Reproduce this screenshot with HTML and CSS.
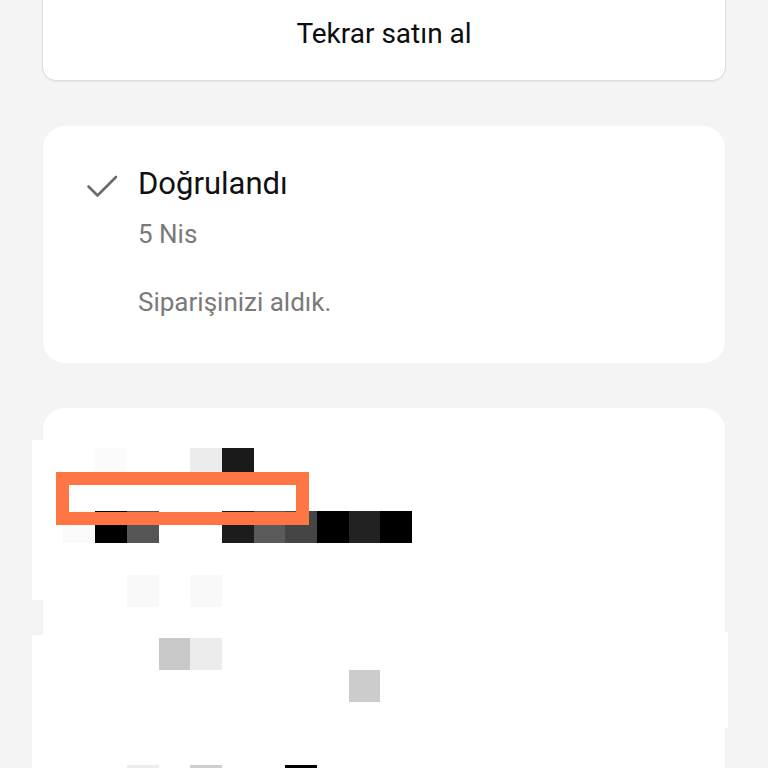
FILE: index.html
```html
<!DOCTYPE html>
<html lang="tr">
  <head>
    <meta charset="UTF-8" />
    <meta name="viewport" content="width=device-width, initial-scale=1.0" />
    <title>Sipariş</title>
    <link rel="stylesheet" href="styles.css">
  </head>
  <body>
    <div class="page">
      <!-- Buy again -->
      <div class="card buyAgain">
        <button class="buyAgainBtn">Tekrar satın al</button>
      </div>

      <!-- Order status -->
      <div class="card status">
        <div class="statusRow">
          <svg class="checkIcon" width="32" height="36" viewBox="0 0 32 36">
            <path d="M2.5 22.5 L11.5 31.5 L30 13" fill="none" stroke="#6b6b6b" stroke-width="2.6" stroke-linecap="round" stroke-linejoin="round" />
          </svg>
          <div class="statusText">
            <div class="statusTitle">Doğrulandı</div>
            <div class="statusDate">5 Nis</div>
            <div class="statusNote">Siparişinizi aldık.</div>
          </div>
        </div>
      </div>

      <!-- Redacted (pixelated) block -->
      <div class="card redacted">
        <svg class="mosaic" width="696" height="328" viewBox="32 440 696 328" shape-rendering="crispEdges">
          <rect x="32" y="440" width="11" height="160" fill="#fff" />
          <rect x="32" y="635" width="11" height="133" fill="#fff" />
          <rect x="725" y="632" width="3" height="96" fill="#fff" />

          <rect x="95.1" y="448" width="31.7" height="32" fill="#fbfbfb" />
          <rect x="190.2" y="448" width="31.7" height="32" fill="#ebebeb" />
          <rect x="221.9" y="448" width="31.7" height="32" fill="#1a1a1a" />

          <rect x="63.4" y="511.4" width="31.7" height="31.7" fill="#fafafa" />
          <rect x="95.1" y="511.4" width="31.7" height="31.7" fill="#000" />
          <rect x="126.8" y="511.4" width="31.7" height="31.7" fill="#555" />
          <rect x="221.9" y="511.4" width="31.7" height="31.7" fill="#1c1c1c" />
          <rect x="253.6" y="511.4" width="31.7" height="31.7" fill="#5a5a5a" />
          <rect x="285.3" y="511.4" width="31.7" height="31.7" fill="#454545" />
          <rect x="317" y="511.4" width="31.7" height="31.7" fill="#000" />
          <rect x="348.7" y="511.4" width="31.7" height="31.7" fill="#222" />
          <rect x="380.4" y="511.4" width="31.7" height="31.7" fill="#000" />

          <rect x="126.8" y="574.8" width="31.7" height="31.7" fill="#f9f9f9" />
          <rect x="190.2" y="574.8" width="31.7" height="31.7" fill="#f9f9f9" />

          <rect x="158.5" y="638.2" width="31.7" height="31.7" fill="#c8c8c8" />
          <rect x="190.2" y="638.2" width="31.7" height="31.7" fill="#ececec" />
          <rect x="348.7" y="669.9" width="31.7" height="31.7" fill="#cccccc" />

          <rect x="126.8" y="765" width="31.7" height="31.7" fill="#ececec" />
          <rect x="190.2" y="765" width="31.7" height="31.7" fill="#cfcfcf" />
          <rect x="285.3" y="765" width="31.7" height="31.7" fill="#000" />

          <!-- annotation frame -->
          <rect x="62.5" y="478" width="240" height="40.5" fill="none" stroke="#fe7643" stroke-width="13" />
        </svg>
      </div>
    </div>
  </body>
</html>
```

FILE: styles.css
```css
html,
body {
  overflow: hidden;
}
body {
  margin: 0;
  padding: 0;
  background-color: #f4f4f4;
  font-family: Roboto, "Noto Sans", sans-serif;
  color: #111;
}

.page {
  display: flex;
  flex-direction: column;
  gap: 45px;
  padding: 0 43px;
}

/* Cards */
.card {
  background-color: #fff;
  border-radius: 22px;
}

/* Buy again */
.buyAgain {
  margin: -40px -1px 0;
  border: 1px solid #dedede;
  border-radius: 14px;
  box-shadow: 0 1px 1px rgba(0, 0, 0, 0.06);
  padding: 58px 0 31px;
}
.buyAgainBtn {
  display: block;
  width: 100%;
  background: none;
  border: none;
  padding: 0;
  font-family: inherit;
  font-size: 28px;
  line-height: 30px;
  color: #0d0d0d;
  text-align: center;
}

/* Status */
.status {
  padding: 40px 43px 45px;
}
.statusRow {
  display: flex;
  align-items: flex-start;
  gap: 20px;
}
.checkIcon {
  flex-shrink: 0;
  margin-top: -2px;
}
.statusTitle {
  font-size: 31px;
  line-height: 36px;
  color: #111;
}
.statusDate,
.statusNote {
  font-size: 26px;
  line-height: 32px;
  color: #7a7a7a;
}
.statusDate {
  margin-top: 16px;
}
.statusNote {
  margin-top: 36px;
}

/* Redacted block, continues below the fold */
.redacted {
  height: 328px;
  padding-top: 32px;
  border-radius: 22px 22px 0 0;
}
.mosaic {
  display: block;
  margin-left: -11px;
  overflow: visible;
}
```
